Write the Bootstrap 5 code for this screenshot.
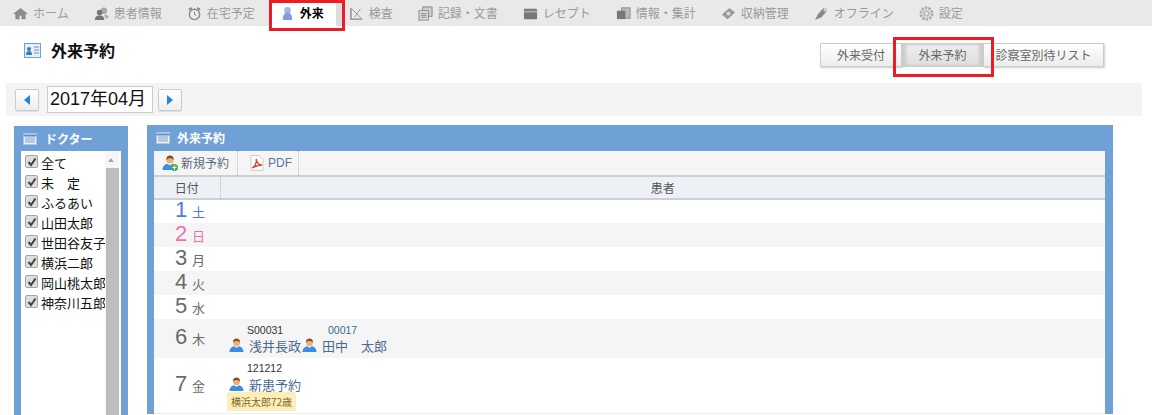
<!doctype html>
<html lang="ja"><head><meta charset="utf-8">
<title>外来予約</title>
<link rel="stylesheet" href="https://cdn.jsdelivr.net/npm/bootstrap@5.3.0/dist/css/bootstrap.min.css">
<style>
html,body{height:415px;overflow:hidden;background:#fff}
body{font-family:"Noto Sans CJK JP","Liberation Sans",sans-serif;font-size:12px;color:#333;position:relative}
.topnav{height:26px;background:#e9e9e9;padding-left:13px}
.topitem{display:flex;align-items:center;gap:5px;padding-right:25px;color:#9a9a9a;font-size:12px;line-height:26px;white-space:nowrap}
.topitem svg{width:15px;height:15px;flex:none}
.topitem.on{background:#fff;color:#000;font-weight:700;margin-left:-11px;padding-left:11px;padding-right:12px;margin-right:13px;box-shadow:6px 0 0 #ddd}
.redbox{position:absolute;border:3px solid #ed1c24;pointer-events:none}
.titlerow{height:57px;padding:0 48px 0 24px}
.ptitle{font-size:16px;font-weight:700;color:#111;margin:0;line-height:20px}
.titleblock{margin-top:-10px;gap:10px}
.titleblock svg{margin-top:1px}
.tabbtn{height:24px;border:1px solid #ccc;background:linear-gradient(#fff,#ececec);font-size:12px;color:#666;padding:0;line-height:22px;text-align:center;box-shadow:1px 1px 2px #ccc;border-radius:0}
.tabbtn.on{background:linear-gradient(#eee,#dedede);box-shadow:inset 3px 0 3px #ccc,inset -3px 0 3px #ccc;border-color:#ccc}
.tabw1{width:82px}.tabw2{width:81px}.tabw3{width:121px}
.datebar{margin:0 10px 0 6px;height:33px;background:#f4f4f4;padding-left:9px}
.arrowbtn{width:24px;height:22px;border:1px solid #ccc;border-radius:2px;background:linear-gradient(#fff,#eee);display:flex;align-items:center;justify-content:center;box-shadow:0 1px 1px #ddd}
.tri{width:0;height:0;border-style:solid}
.tri.l{border-width:5px 6px 5px 0;border-color:transparent #1e88d8 transparent transparent}
.tri.r{border-width:5px 0 5px 6px;border-color:transparent transparent transparent #1e88d8}
.yminput{width:106px;height:27px;margin:0 5px 0 8px;border:1px solid #ccc;background:#fff;font:18px/25px "Liberation Sans","Noto Sans CJK JP",sans-serif;color:#111;padding-left:2px;white-space:nowrap}
.panels{padding:9px 0 0 14px;gap:19px}
.bluebox{background:#6fa0d6;padding:0 7px}
.leftbox{width:114px;margin-top:1px;height:300px}
.mainbox{width:966px;padding-right:8px;height:289px;overflow:hidden}
.boxhead{height:26px;display:flex;align-items:center;gap:7px;color:#fff;font-weight:700;font-size:12px;padding-left:2px}
.leftbox .boxhead{height:25px;gap:8px}
.boxhead svg{width:14px;height:12px}
.checklist{background:#fff;height:280px;position:relative;padding-top:2px}
.chkrow{display:flex;align-items:center;height:20px;font-size:13px;color:#111;padding-left:4px;gap:3px;white-space:nowrap;overflow:hidden;width:84px}
.chkbox{width:13px;height:13px;border:1px solid #a5a5a5;border-radius:2px;background:#dedede;flex:none;display:flex;align-items:center;justify-content:center;margin-top:-3px}
.chkbox svg{width:10px;height:10px}
.vbar{position:absolute;right:2px;top:0;width:14px;height:100%;background:#f6f6f6}
.vbar i{position:absolute;left:1px;right:0;top:17px;bottom:0;background:#bdbdbd;display:block}
.vbar b{position:absolute;left:3px;top:7px;width:0;height:0;border:solid transparent;border-width:0 3.5px 4px;border-bottom-color:#a5a5a5}
.toolbar{height:26px;background:#f5f5f5;border-bottom:2px solid #cdd0d3;padding-left:8px;color:#555;font-size:12px}
.tool{display:flex;align-items:center;gap:3px;height:24px;padding-right:8px;border-right:1px dotted #bbb;color:#5a6a7a}
.tool svg{width:16px;height:16px}
.tool.pdf{padding:0 6px 0 11px;gap:3px;color:#5878a0;font-family:"Liberation Sans",sans-serif;font-size:12px}
.sched{width:100%;background:#fff;margin:0}
.sched>thead>tr>th{height:22px;padding:0;background:#edf1f5;border:0;border-bottom:2px solid #cdd0d3;font-weight:400;font-size:12px;color:#555;text-align:center;line-height:20px}
.sched th:first-child{width:66px;border-right:1px dotted #bbb}
.sched td{padding:0;border:0;background:#fff;vertical-align:middle}
.sched tr.alt td{background:#f5f5f5}
.r24{height:24px}
.r39{height:39px}
.r55{height:55px}
.daycell{padding-left:21px!important;color:#6a6a6a;line-height:1;white-space:nowrap}
.dnum{font:22px/22px "Liberation Sans",sans-serif;display:inline-block;width:17px;vertical-align:top;margin-top:-1px}
.dwd{font-size:13px;display:inline-block;line-height:22px;vertical-align:top;margin-top:1px}
.dsat,.dsat span{color:#4f78e6}
.dsun,.dsun span{color:#f06fb0}
.patrow{display:flex;padding-left:9px}
.pat{position:relative;display:flex;flex-direction:column;width:73px;flex:none}
.pat.wide{width:90px}
.pat.wide .pcode{padding-left:26px;color:#2f6f8f}
.pat.tall{height:53px}
.pat.tall .pcode{margin:2px 0 1px}
.pcode{font:10.5px/14px "Liberation Sans",sans-serif;color:#333;padding-left:18px;white-space:nowrap}
.pname{display:flex;align-items:center;gap:5px;color:#4a6a90;font-size:13px;line-height:18px;white-space:nowrap}
.pname svg{width:15px;height:15px;flex:none}
.tipnote{position:absolute;left:-2px;top:33px;background:#fdeeb5;color:#7a6a30;font-size:10px;line-height:19px;padding:0 4px;border-radius:2px;white-space:nowrap;z-index:2}
.lastrow td{border-bottom:1px solid #eee!important}
</style></head><body>
<svg width="0" height="0" class="position-absolute">
<defs>
<symbol id="person" viewBox="0 0 16 16"><circle cx="8" cy="5" r="3.600" fill="#e8b07a"/><path d="M4.200 5c0-3 1.600-4.400 3.800-4.400S11.800 2 11.800 5C10.500 3.500 9 3.200 8 3.200S5.500 3.500 4.200 5z" fill="#8a4a1c"/><path d="M.5 15c0-3.500 2.500-6 5-6.200L8 10.500l2.500-1.700c2.500.2 5 2.700 5 6.200z" fill="#3b8fe0"/></symbol>
<symbol id="list" viewBox="0 0 14 12"><rect x=".5" y=".5" width="13" height="11" fill="#eef3fa" stroke="#a9c4e4"/><path d="M.5 2.500h13" stroke="#5b8cc8" stroke-width="2"/><path d="M2 5h10M2 7h10M2 9h10" stroke="#7f9fc6"/></symbol>
<symbol id="chk" viewBox="0 0 10 10"><path d="M1.500 5l2.500 3 4.500-6.500" fill="none" stroke="#444" stroke-width="2"/></symbol>
</defs></svg>

<nav class="topnav d-flex align-items-center">
<a class="topitem text-decoration-none"><svg viewBox="0 0 16 16"><path d="M8 2 0 8.500h2.500V14H7v-3.500h2V14h4.500V8.500H16z" fill="#8c8c8c"/></svg>ホーム</a>
<a class="topitem text-decoration-none"><svg viewBox="0 0 16 16"><circle cx="10.500" cy="5" r="3.500" fill="#aaa"/><circle cx="6" cy="7" r="3" fill="#777"/><path d="M1 15c0-4 2-5 5-5s5 1 5 5z" fill="#777"/><path d="M11 9c3 0 4.500 1 4.500 4H12z" fill="#aaa"/></svg>患者情報</a>
<a class="topitem text-decoration-none"><svg viewBox="0 0 16 16"><circle cx="8" cy="9" r="5.500" fill="#eee" stroke="#888" stroke-width="1.500"/><path d="M8 6v3l2 1" stroke="#777" fill="none"/><path d="M2 4l3-2M14 4l-3-2" stroke="#888" stroke-width="2"/></svg>在宅予定</a>
<a class="topitem on text-decoration-none"><svg viewBox="0 0 16 16"><circle cx="8" cy="4.500" r="3.500" fill="#9db8e6"/><path d="M3 15c0-6 2-8 5-8s5 2 5 8z" fill="#7f9fdc"/></svg>外来</a>
<a class="topitem text-decoration-none"><svg viewBox="0 0 16 16"><path d="M2 2v12h12" fill="none" stroke="#888" stroke-width="1.500"/><path d="M3 3l10 10M12 3 6 12" stroke="#999" fill="none"/></svg>検査</a>
<a class="topitem text-decoration-none"><svg viewBox="0 0 16 16"><rect x="5" y="1" width="10" height="10" fill="#ccc" stroke="#888"/><rect x="1" y="5" width="10" height="10" fill="#ddd" stroke="#888"/><path d="M3 8h6M3 10h6M3 12h6" stroke="#888"/></svg>記録・文書</a>
<a class="topitem text-decoration-none"><svg viewBox="0 0 16 16"><rect x="1" y="3" width="14" height="11" rx="1" fill="#777"/><rect x="1" y="5" width="14" height="2" fill="#aaa"/></svg>レセプト</a>
<a class="topitem text-decoration-none"><svg viewBox="0 0 16 16"><rect x="6" y="2" width="9" height="11" fill="#bbb" stroke="#888"/><rect x="1" y="5" width="9" height="9" fill="#777"/></svg>情報・集計</a>
<a class="topitem text-decoration-none"><svg viewBox="0 0 16 16"><path d="M1 9 9 2l6 5-8 7z" fill="#999"/><circle cx="8" cy="8" r="2" fill="#ddd"/></svg>収納管理</a>
<a class="topitem text-decoration-none"><svg viewBox="0 0 16 16"><path d="M1 15l3-6 6-7 4 3-6 7z" fill="#888"/><circle cx="12" cy="4" r="2" fill="#ccc"/></svg>オフライン</a>
<a class="topitem text-decoration-none"><svg viewBox="0 0 16 16"><circle cx="8" cy="8" r="6" fill="none" stroke="#aaa" stroke-width="3" stroke-dasharray="2.500 1.200"/><circle cx="8" cy="8" r="3.500" fill="#bbb"/><circle cx="8" cy="8" r="1.500" fill="#eee"/></svg>設定</a>
</nav>

<div class="titlerow d-flex justify-content-between align-items-center">
  <div class="titleblock d-flex align-items-center">
    <svg width="17" height="15" viewBox="0 0 17 15"><rect x=".5" y=".5" width="16" height="14" fill="#e6f0fb" stroke="#6fa0d6"/><circle cx="5" cy="6" r="2" fill="#3f78c0"/><path d="M2 12c0-3 1-4 3-4s3 1 3 4z" fill="#3f78c0"/><path d="M10 4h5M10 7h5M10 10h5" stroke="#6f90b8"/></svg>
    <h1 class="ptitle">外来予約</h1>
  </div>
  <div class="d-flex">
    <button class="tabbtn tabw1">外来受付</button>
    <button class="tabbtn on tabw2">外来予約</button>
    <button class="tabbtn tabw3">診察室別待リスト</button>
  </div>
</div>

<div class="datebar d-flex align-items-center">
  <span class="arrowbtn"><i class="tri l"></i></span>
  <div class="yminput">2017年04月</div>
  <span class="arrowbtn"><i class="tri r"></i></span>
</div>

<div class="panels d-flex align-items-start">
  <section class="bluebox leftbox">
    <div class="boxhead"><svg><use href="#list"/></svg>ドクター</div>
    <div class="checklist">
      <div class="chkrow"><span class="chkbox"><svg><use href="#chk"/></svg></span>全て</div>
      <div class="chkrow"><span class="chkbox"><svg><use href="#chk"/></svg></span>未　定</div>
      <div class="chkrow"><span class="chkbox"><svg><use href="#chk"/></svg></span>ふるあい</div>
      <div class="chkrow"><span class="chkbox"><svg><use href="#chk"/></svg></span>山田太郎</div>
      <div class="chkrow"><span class="chkbox"><svg><use href="#chk"/></svg></span>世田谷友子</div>
      <div class="chkrow"><span class="chkbox"><svg><use href="#chk"/></svg></span>横浜二郎</div>
      <div class="chkrow"><span class="chkbox"><svg><use href="#chk"/></svg></span>岡山桃太郎</div>
      <div class="chkrow"><span class="chkbox"><svg><use href="#chk"/></svg></span>神奈川五郎</div>
      <div class="vbar"><b></b><i></i></div>
    </div>
  </section>
  <section class="bluebox mainbox">
    <div class="boxhead"><svg><use href="#list"/></svg>外来予約</div>
    <div class="toolbar d-flex align-items-center">
      <span class="tool"><svg viewBox="0 0 16 16"><use href="#person"/><circle cx="12.500" cy="12.500" r="3.500" fill="#4caf50"/><path d="M12.500 10.500v4M10.500 12.500h4" stroke="#fff"/></svg>新規予約</span>
      <span class="tool pdf"><svg viewBox="0 0 16 16"><path d="M2 .5h8l4 4v11H2z" fill="#fff" stroke="#ccc"/><path d="M3 13c3-1 5-6 4-9 1 4 3 6 6 6-3 0-6 1-10 3z" fill="none" stroke="#e04030" stroke-width="1.300"/></svg>PDF</span>
    </div>
    <table class="sched">
      <thead><tr><th>日付</th><th>患者</th></tr></thead>
      <tbody>
        <tr class="r24"><td class="daycell dsat"><span class="dnum">1</span><span class="dwd">土</span></td><td></td></tr>
        <tr class="r24 alt"><td class="daycell dsun"><span class="dnum">2</span><span class="dwd">日</span></td><td></td></tr>
        <tr class="r24"><td class="daycell"><span class="dnum">3</span><span class="dwd">月</span></td><td></td></tr>
        <tr class="r24 alt"><td class="daycell"><span class="dnum">4</span><span class="dwd">火</span></td><td></td></tr>
        <tr class="r24"><td class="daycell"><span class="dnum">5</span><span class="dwd">水</span></td><td></td></tr>
        <tr class="alt r39"><td class="daycell"><span class="dnum">6</span><span class="dwd">木</span></td><td>
          <div class="patrow">
            <div class="pat"><span class="pcode">S00031</span><span class="pname"><svg><use href="#person"/></svg>浅井長政</span></div>
            <div class="pat wide"><span class="pcode">00017</span><span class="pname"><svg><use href="#person"/></svg>田中　太郎</span></div>
          </div></td></tr>
        <tr class="lastrow r55"><td class="daycell"><span class="dnum">7</span><span class="dwd">金</span></td><td>
          <div class="patrow">
            <div class="pat tall"><span class="pcode">121212</span><span class="pname"><svg><use href="#person"/></svg>新患予約</span><span class="tipnote">横浜太郎72歳</span></div>
          </div></td></tr>
      </tbody>
    </table>
  </section>
</div>
<div class="redbox" style="left:269px;top:0;width:76px;height:31px"></div>
<div class="redbox" style="left:893px;top:37px;width:101px;height:40px"></div>
<script src="https://cdn.jsdelivr.net/npm/bootstrap@5.3.0/dist/js/bootstrap.bundle.min.js"></script>
</body></html>
